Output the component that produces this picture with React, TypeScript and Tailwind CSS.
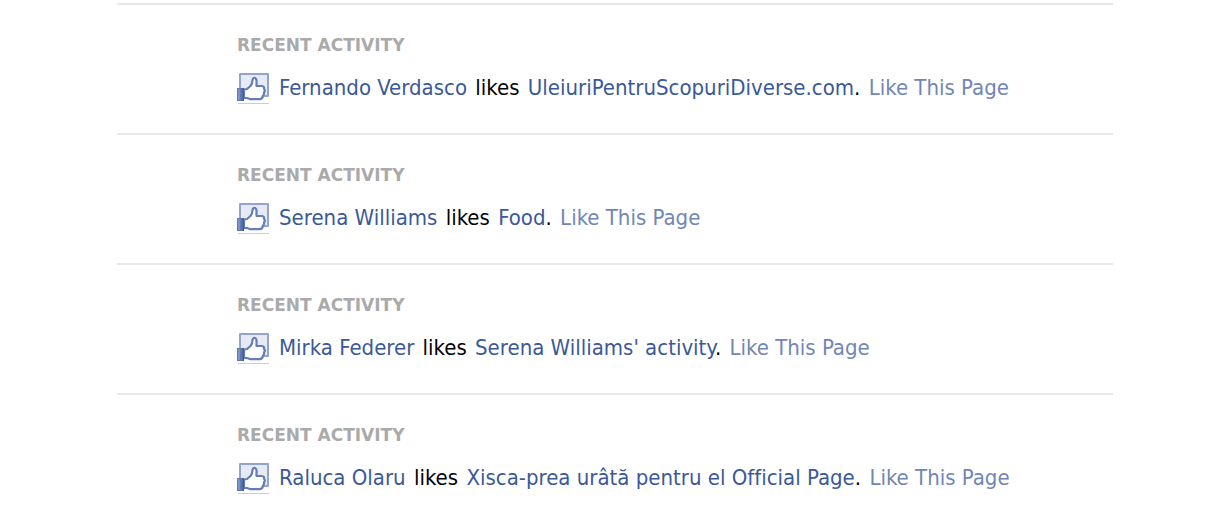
type Activity = { name: string; page: string };

const activities: Activity[] = [
  { name: "Fernando Verdasco", page: "UleiuriPentruScopuriDiverse.com" },
  { name: "Serena Williams", page: "Food" },
  { name: "Mirka Federer", page: "Serena Williams' activity" },
  { name: "Raluca Olaru", page: "Xisca-prea urâtă pentru el Official Page" },
];

function LikeIcon() {
  return (
    <svg viewBox="0 0 34 34" className="size-[34px] shrink-0" aria-hidden="true">
      <path d="M3 3H31V25H3Z" fill="#e6eaf4" stroke="#94a4cc" strokeWidth="2" strokeLinejoin="round" />
      <path
        d="M7 18.5L10 18L13.5 15Q15.5 12.5 15.5 9Q16 6.5 18 7Q20 8 19.5 11V15H25Q27.5 15.2 27 17.8Q28.6 19.3 27 21.5Q27.4 23.5 25.8 24.8Q25.8 27.6 23 28.2H13.5L10 27H7Z"
        fill="#fff"
        stroke="#647db5"
        strokeWidth="2.2"
        strokeLinejoin="round"
      />
      <path d="M0 17H7V30H0Z" fill="#5f7ab2" />
      <path d="M1 18H3V29H1Z" fill="#7d93c1" />
      <path d="M5.5 17H7V30H5.5Z" fill="#405c99" />
      <path d="M1 32.5H32" stroke="#e2c4c8" strokeWidth="1" />
    </svg>
  );
}

function ActivityRow({ name, page }: Activity) {
  return (
    <li className="border-t-2 border-[#e8e8e8] pt-7 pb-[27px] pl-[120px]">
      <h2 className="text-[17px] leading-6 font-bold text-[#aaaaaa] font-['DejaVu_Sans',Tahoma,sans-serif]">
        RECENT ACTIVITY
      </h2>
      <div className="mt-[13px] flex h-9 items-center gap-2">
        <LikeIcon />
        <p className="text-[22px] leading-7 whitespace-nowrap text-black [font-variant-ligatures:none]">
          <a href="#profile" className="text-[#3b5998]">{name}</a>{" "}
          <span className="mx-0.5">likes</span>{" "}
          <a href="#page" className="text-[#3b5998]">{page}</a>.{" "}
          <a href="#like" className="ml-0.5 text-[#7186b4]">Like This Page</a>
        </p>
      </div>
    </li>
  );
}

export default function App() {
  return (
    <main className="overflow-hidden bg-white px-[117px] pt-[3px] font-['DejaVu_Sans_Condensed',Tahoma,sans-serif]">
      <ul>
        {activities.map((activity) => (
          <ActivityRow key={activity.name} {...activity} />
        ))}
      </ul>
    </main>
  );
}
